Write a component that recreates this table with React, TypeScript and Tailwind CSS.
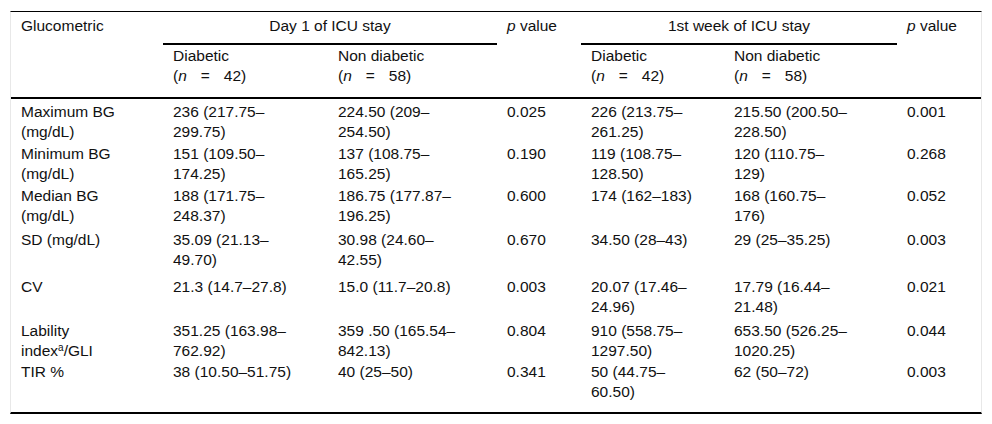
const cols = 'grid grid-cols-[152px_165px_169px_84px_143px_173px_84px]';

type Row = {
  label: React.ReactNode;
  cells: React.ReactNode[];
  h: string;
};

const rows: Row[] = [
  {
    label: <>Maximum BG<br />(mg/dL)</>,
    cells: [
      <>236 (217.75–<br />299.75)</>,
      <>224.50 (209–<br />254.50)</>,
      '0.025',
      <>226 (213.75–<br />261.25)</>,
      <>215.50 (200.50–<br />228.50)</>,
      '0.001',
    ],
    h: 'h-[42px]',
  },
  {
    label: <>Minimum BG<br />(mg/dL)</>,
    cells: [
      <>151 (109.50–<br />174.25)</>,
      <>137 (108.75–<br />165.25)</>,
      '0.190',
      <>119 (108.75–<br />128.50)</>,
      <>120 (110.75–<br />129)</>,
      '0.268',
    ],
    h: 'h-[42px]',
  },
  {
    label: <>Median BG<br />(mg/dL)</>,
    cells: [
      <>188 (171.75–<br />248.37)</>,
      <>186.75 (177.87–<br />196.25)</>,
      '0.600',
      '174 (162–183)',
      <>168 (160.75–<br />176)</>,
      '0.052',
    ],
    h: 'h-[44px]',
  },
  {
    label: 'SD (mg/dL)',
    cells: [
      <>35.09 (21.13–<br />49.70)</>,
      <>30.98 (24.60–<br />42.55)</>,
      '0.670',
      '34.50 (28–43)',
      '29 (25–35.25)',
      '0.003',
    ],
    h: 'h-[47px]',
  },
  {
    label: 'CV',
    cells: [
      '21.3 (14.7–27.8)',
      '15.0 (11.7–20.8)',
      '0.003',
      <>20.07 (17.46–<br />24.96)</>,
      <>17.79 (16.44–<br />21.48)</>,
      '0.021',
    ],
    h: 'h-[44px]',
  },
  {
    label: <>Lability<br />index<sup className="text-[10px]">a</sup>/GLI</>,
    cells: [
      <>351.25 (163.98–<br />762.92)</>,
      <>359 .50 (165.54–<br />842.13)</>,
      '0.804',
      <>910 (558.75–<br />1297.50)</>,
      <>653.50 (526.25–<br />1020.25)</>,
      '0.044',
    ],
    h: 'h-[41px]',
  },
  {
    label: 'TIR %',
    cells: [
      '38 (10.50–51.75)',
      '40 (25–50)',
      '0.341',
      <>50 (44.75–<br />60.50)</>,
      '62 (50–72)',
      '0.003',
    ],
    h: 'h-[53px]',
  },
];

function N({ n }: { n: number }) {
  return (
    <>
      (<i>n</i>
      <span className="px-[14px]">=</span>
      {n})
    </>
  );
}

export default function App() {
  return (
    <div className="min-h-screen bg-white pt-[11px] font-['Liberation_Sans',Arial,sans-serif] text-[15.5px] leading-[20px] text-[#111]">
      <div className="mx-[10px] border-x border-t border-b-2 border-x-[#e8e8e8] border-t-black border-b-black">
        {/* header */}
        <div className={`${cols} grid-rows-[33px_52px] border-b-2 border-black`}>
          <div className="row-span-2 pl-[10px] pt-[4px]">Glucometric</div>
          <div className="col-span-2 border-b-2 border-black pt-[4px] text-center">Day 1 of ICU stay</div>
          <div className="row-span-2 pl-[10px] pt-[4px]">
            <i>p</i> value
          </div>
          <div className="col-span-2 border-b-2 border-black pt-[4px] text-center">1st week of ICU stay</div>
          <div className="row-span-2 pl-[10px] pt-[4px]">
            <i>p</i> value
          </div>
          <div className="pl-[10px] pt-[1px]">
            Diabetic
            <br />
            <N n={42} />
          </div>
          <div className="pl-[10px] pt-[1px]">
            Non diabetic
            <br />
            <N n={58} />
          </div>
          <div className="pl-[10px] pt-[1px]">
            Diabetic
            <br />
            <N n={42} />
          </div>
          <div className="pl-[10px] pt-[1px]">
            Non diabetic
            <br />
            <N n={58} />
          </div>
        </div>

        {/* body */}
        {rows.map((r, i) => (
          <div key={i} className={`${cols} ${r.h}`}>
            <div className="whitespace-nowrap pl-[10px] pt-[3px]">{r.label}</div>
            {r.cells.map((c, j) => (
              <div key={j} className="whitespace-nowrap pl-[10px] pt-[3px]">
                {c}
              </div>
            ))}
          </div>
        ))}
      </div>
    </div>
  );
}
